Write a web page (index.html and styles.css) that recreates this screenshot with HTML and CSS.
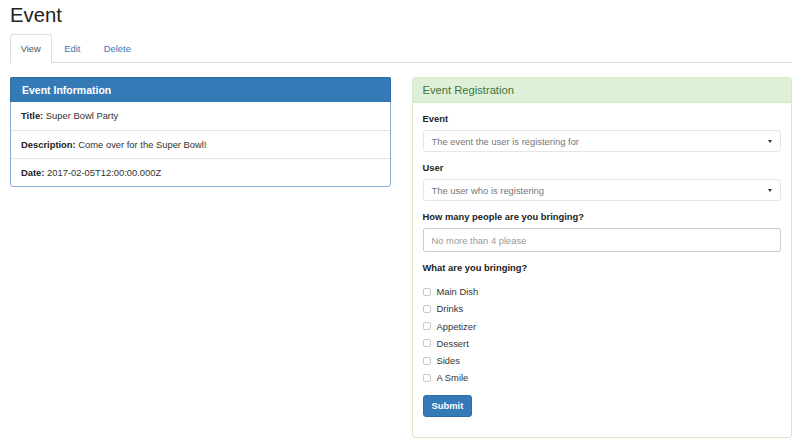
FILE: index.html
```html
<!DOCTYPE html>
<html lang="en">
<head>
<meta charset="utf-8">
<title>Event</title>
<link rel="stylesheet" href="styles.css">
</head>
<body>
<div class="page">
  <h1 class="title">Event</h1>
  <ul class="tabs">
    <li class="tab active"><a>View</a></li>
    <li class="tab"><a>Edit</a></li>
    <li class="tab"><a>Delete</a></li>
  </ul>
  <div class="cols">
    <section class="panel panel-primary">
      <div class="panel-heading"><h3 class="panel-title">Event Information</h3></div>
      <ul class="list">
        <li><strong>Title:</strong> Super Bowl Party</li>
        <li><strong>Description:</strong> Come over for the Super Bowl!</li>
        <li><strong>Date:</strong> 2017-02-05T12:00:00.000Z</li>
      </ul>
    </section>
    <section class="panel panel-success">
      <div class="panel-heading"><span class="panel-title-light">Event Registration</span></div>
      <form class="panel-body">
        <div class="group">
          <label class="field-label">Event</label>
          <div class="select"><span>The event the user is registering for</span><span class="caret"></span></div>
        </div>
        <div class="group">
          <label class="field-label">User</label>
          <div class="select"><span>The user who is registering</span><span class="caret"></span></div>
        </div>
        <div class="group">
          <label class="field-label">How many people are you bringing?</label>
          <input class="input" type="text" placeholder="No more than 4 please">
        </div>
        <div class="group group-checks">
          <label class="field-label">What are you bringing?</label>
          <div class="checks">
            <label class="check"><span class="box"></span>Main Dish</label>
            <label class="check"><span class="box"></span>Drinks</label>
            <label class="check"><span class="box"></span>Appetizer</label>
            <label class="check"><span class="box"></span>Dessert</label>
            <label class="check"><span class="box"></span>Sides</label>
            <label class="check"><span class="box"></span>A Smile</label>
          </div>
        </div>
        <button type="button" class="btn">Submit</button>
      </form>
    </section>
  </div>
</div>
</body>
</html>
```
FILE: styles.css
```css
* { box-sizing: border-box; }
html, body { margin: 0; padding: 0; background: #fff; }
body {
  font-family: "Liberation Sans", Arial, sans-serif;
  font-size: 9.4px;
  color: #333;
}
.page { padding: 0 8px 0 10px; }

.title {
  font-size: 20.3px;
  font-weight: normal;
  line-height: 23px;
  margin: 4px 0 7px;
  color: #222;
}

.tabs {
  list-style: none;
  margin: 0;
  padding: 0;
  display: flex;
  border-bottom: 1px solid #ddd;
}
.tab {
  height: 29px;
  margin-bottom: -1px;
  margin-right: 2px;
  border: 1px solid transparent;
  border-bottom: none;
  border-radius: 3px 3px 0 0;
  padding: 0 9.7px;
  line-height: 27px;
}
.tab a { color: #337ab7; }
.tab.active { border-color: #ddd; background: #fff; }
.tab.active a { color: #555; }

.cols {
  margin-top: 14px;
  display: grid;
  grid-template-columns: 1fr 1fr;
  column-gap: 21px;
  align-items: start;
}

.panel {
  border: 1px solid #ddd;
  border-radius: 3px;
  background: #fff;
}
.panel-heading {
  height: 24px;
  display: flex;
  align-items: center;
  padding: 0 10px;
  border-radius: 2px 2px 0 0;
}
.panel-primary { border-color: #8aaed3; }
.panel-primary .panel-heading { background: #337ab7; color: #fff; margin: -1px -1px 0; height: 25px; padding: 0 11px; border: 1px solid #2e6da4; border-bottom: none; }
.panel-title { margin: 0; font-size: 10.5px; font-weight: bold; }

.panel-success { border-color: #d6e9c6; }
.panel-success .panel-heading { background: #dff0d8; color: #3c763d; border-bottom: 1px solid #d6e9c6; height: 25px; }
.panel-title-light { font-size: 11.2px; }

.list { list-style: none; margin: 0; padding: 0; }
.list li {
  height: 28px;
  line-height: 27px;
  padding: 0 10px;
}
.list li + li { border-top: 1px solid #e3e3e3; line-height: 27px; }
.list strong { font-weight: bold; color: #222; }

.panel-body { padding: 9px 10px 20px; margin: 0; }
.group { margin-bottom: 9px; }
.field-label {
  display: block;
  font-weight: bold;
  line-height: 13px;
  margin-bottom: 5px;
  color: #222;
}
.select {
  height: 22px;
  border: 1px solid #e6e6e6;
  border-radius: 3px;
  display: flex;
  align-items: center;
  justify-content: space-between;
  padding: 0 8px 0 8px;
  color: #777;
  background: #fff;
}
.caret {
  width: 0;
  height: 0;
  border-left: 2.5px solid transparent;
  border-right: 2.5px solid transparent;
  border-top: 3px solid #333;
  margin-right: 0;
}
.input {
  display: block;
  width: 100%;
  height: 24px;
  border: 1px solid #ccc;
  border-radius: 2px;
  padding: 0 8px;
  font-family: inherit;
  font-size: 9.4px;
  color: #555;
  background: #fff;
  outline: none;
  margin: 0;
}
.input::placeholder { color: #999; }

.group-checks { margin-bottom: 8.6px; }
.group-checks .field-label { margin-bottom: 9.2px; }
.checks { display: flex; flex-direction: column; }
.check {
  display: flex;
  align-items: center;
  height: 17.2px;
  color: #333;
}
.box {
  width: 8px;
  height: 8px;
  border: 1px solid #c9c9c9;
  border-radius: 2px;
  background: #fff;
  margin-right: 6px;
  flex: none;
}

.btn {
  display: block;
  height: 22px;
  padding: 0 8px;
  border: 1px solid #2e6da4;
  border-radius: 3px;
  background: #337ab7;
  color: #fff;
  font-family: inherit;
  font-size: 9.4px;
  font-weight: bold;
  margin: 0;
}
```
